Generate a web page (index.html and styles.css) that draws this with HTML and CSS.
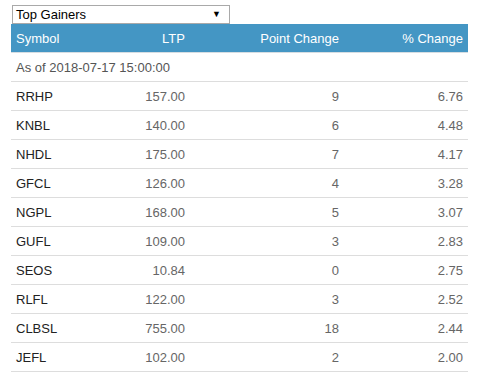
FILE: index.html
```html
<!DOCTYPE html>
<html>
<head>
<meta charset="utf-8">
<link rel="stylesheet" href="styles.css">
</head>
<body>
<div class="wrap">
  <div class="select">
    <span class="select-label">Top Gainers</span>
    <span class="select-arrow">&#9660;</span>
  </div>
  <table class="grid">
    <colgroup>
      <col class="c1"><col class="c2"><col class="c3"><col class="c4">
    </colgroup>
    <thead>
      <tr><th class="l">Symbol</th><th>LTP</th><th>Point Change</th><th>% Change</th></tr>
    </thead>
    <tbody>
      <tr><td class="l asof" colspan="4">As of 2018-07-17 15:00:00</td></tr>
      <tr><td class="sym">RRHP</td><td>157.00</td><td>9</td><td>6.76</td></tr>
      <tr><td class="sym">KNBL</td><td>140.00</td><td>6</td><td>4.48</td></tr>
      <tr><td class="sym">NHDL</td><td>175.00</td><td>7</td><td>4.17</td></tr>
      <tr><td class="sym">GFCL</td><td>126.00</td><td>4</td><td>3.28</td></tr>
      <tr><td class="sym">NGPL</td><td>168.00</td><td>5</td><td>3.07</td></tr>
      <tr><td class="sym">GUFL</td><td>109.00</td><td>3</td><td>2.83</td></tr>
      <tr><td class="sym">SEOS</td><td>10.84</td><td>0</td><td>2.75</td></tr>
      <tr><td class="sym">RLFL</td><td>122.00</td><td>3</td><td>2.52</td></tr>
      <tr><td class="sym">CLBSL</td><td>755.00</td><td>18</td><td>2.44</td></tr>
      <tr><td class="sym">JEFL</td><td>102.00</td><td>2</td><td>2.00</td></tr>
    </tbody>
  </table>
</div>
</body>
</html>
```
FILE: styles.css
```css
html, body { margin: 0; padding: 0; background: #fff; }
body { font-family: "Liberation Sans", Arial, sans-serif; font-size: 13px; color: #333; }
.wrap { padding: 5px 0 0 11px; }
.select {
  margin-left: 1px;
  width: 213px;
  height: 17px;
  border: 1px solid #a9a9a9;
  display: flex;
  align-items: center;
  justify-content: space-between;
  padding: 0 0 0 3px;
  box-sizing: content-box;
  color: #000;
  font-size: 13px;
}
.select-label { line-height: 17px; }
.select-arrow { font-size: 9px; margin-right: 8px; line-height: 17px; }
.grid { border-collapse: collapse; width: 457px; table-layout: fixed; }
.c1 { width: 100px; }
.c2 { width: 79px; }
.c3 { width: 154px; }
.c4 { width: 124px; }
th {
  background: #4496c4;
  color: #fff;
  font-weight: normal;
  height: 28px;
  padding: 0 5px;
  text-align: right;
  border-bottom: 1px solid #d6dde2;
}
th.l { text-align: left; }
td {
  height: 28px;
  padding: 0 5px;
  border-bottom: 1px solid #ddd;
  text-align: right;
  color: #666;
}
td.l { text-align: left; }
td.asof { color: #555; }
td.sym { text-align: left; color: #222; }
```
